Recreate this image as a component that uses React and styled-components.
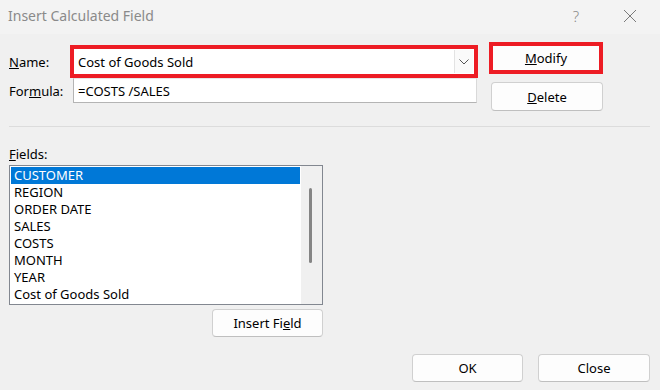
import React from 'react'
import styled, { createGlobalStyle } from 'styled-components'

const GlobalStyle = createGlobalStyle`
  html, body {
    margin: 0;
    padding: 0;
    background: #f0f0f0;
  }
  body {
    font-family: "Segoe UI", "Noto Sans", "Open Sans", sans-serif;
    font-size: 13px;
    color: #000;
  }
`

const fields = ['CUSTOMER', 'REGION', 'ORDER DATE', 'SALES', 'COSTS', 'MONTH', 'YEAR', 'Cost of Goods Sold']

function App() {
  return (
    <>
      <GlobalStyle />
      <Dialog>
        <TitleBar>
          <Title>Insert Calculated Field</Title>
          <TitleIcons>
            <Help>?</Help>
            <svg width="14" height="14" viewBox="0 0 14 14">
              <path d="M1 1 L13 13 M13 1 L1 13" stroke="#7a7a7a" strokeWidth="1" fill="none" />
            </svg>
          </TitleIcons>
        </TitleBar>

        <Body>
          <Top>
            <Form>
              <Label><u>N</u>ame:</Label>
              <Combo>
                <ComboText>Cost of Goods Sold</ComboText>
                <DropBtn>
                  <svg width="10" height="6" viewBox="0 0 10 6">
                    <path d="M0.5 0.5 L5 5 L9.5 0.5" stroke="#555" strokeWidth="1" fill="none" />
                  </svg>
                </DropBtn>
              </Combo>
              <Label>For<u>m</u>ula:</Label>
              <Input>=COSTS /SALES</Input>
            </Form>
            <Side>
              <Highlight>
                <Button $w={106} $h={24} $flat><u>M</u>odify</Button>
              </Highlight>
              <Button $w={112} $h={29} $mt={8} $ml={2}><u>D</u>elete</Button>
            </Side>
          </Top>

          <Separator />

          <Label $block>
            <u>F</u>ields:
          </Label>
          <ListBox>
            <Items>
              {fields.map((f, i) => (
                <Item key={f} $selected={i === 0}>{f}</Item>
              ))}
            </Items>
            <Track>
              <Thumb />
            </Track>
          </ListBox>
          <InsertRow>
            <Button $w={111} $h={28}>Insert Fi<u>e</u>ld</Button>
          </InsertRow>

          <Footer>
            <Button $w={111} $h={28}>OK</Button>
            <Button $w={112} $h={28}>Close</Button>
          </Footer>
        </Body>
      </Dialog>
    </>
  )
}

const Dialog = styled.div`
  width: 660px;
  height: 390px;
  background: #f0f0f0;
  overflow: hidden;
  display: flex;
  flex-direction: column;
`

const TitleBar = styled.div`
  height: 34px;
  background: #f3f3f3;
  display: flex;
  align-items: center;
  justify-content: space-between;
  padding: 0 23px 0 8px;
  flex-shrink: 0;
`

const Title = styled.span`
  color: #8a8a8a;
  font-size: 14px;
  margin-top: -3px;
`

const TitleIcons = styled.div`
  display: flex;
  align-items: center;
  gap: 44px;
  margin-top: -3px;
`

const Help = styled.span`
  color: #8a8a8a;
  font-size: 15px;
  font-weight: 300;
`

const Body = styled.div`
  padding: 0 10px 0 9px;
  display: flex;
  flex-direction: column;
`

const Top = styled.div`
  display: flex;
  align-items: flex-start;
  padding-top: 8px;
  gap: 11px;
`

const Form = styled.div`
  display: grid;
  grid-template-columns: 61px 408px;
  align-items: center;
  margin-top: 3px;
`

const Label = styled.span`
  font-size: 13px;
  color: #000;
  ${p => p.$block && `
    display: block;
    margin-top: 18px;
    height: 20px;
    line-height: 18px;
  `}
`

const Combo = styled.div`
  box-sizing: border-box;
  height: 33px;
  border: 4px solid #ed1c24;
  background: #fff;
  display: flex;
  align-items: center;
  justify-content: space-between;
`

const ComboText = styled.span`
  padding-left: 4px;
  font-size: 13px;
`

const DropBtn = styled.div`
  width: 18px;
  height: 23px;
  margin-right: 1px;
  border-left: 1px solid #e3e3e3;
  background: #fafafa;
  display: flex;
  align-items: center;
  justify-content: center;
`

const Input = styled.div`
  box-sizing: border-box;
  height: 25px;
  margin-left: 3px;
  width: 404px;
  background: #fff;
  border: 1px solid #b4b4b4;
  border-top-color: #e6e6e6;
  border-right-color: #d9d9d9;
  padding: 0 4px;
  display: flex;
  align-items: center;
  font-size: 13px;
`

const Side = styled.div`
  display: flex;
  flex-direction: column;
`

const Highlight = styled.div`
  box-sizing: border-box;
  width: 114px;
  height: 32px;
  border: 4px solid #ed1c24;
  display: flex;
`

const Button = styled.div`
  box-sizing: border-box;
  width: ${p => p.$w}px;
  height: ${p => p.$h}px;
  margin-top: ${p => p.$mt || 0}px;
  margin-left: ${p => p.$ml || 0}px;
  background: #fdfdfd;
  border: ${p => (p.$flat ? 'none' : '1px solid #d0d0d0')};
  border-bottom-color: #bfbfbf;
  border-radius: ${p => (p.$flat ? 0 : 4)}px;
  display: flex;
  align-items: center;
  justify-content: center;
  font-size: 13px;
  color: #000;
  flex-shrink: 0;
`

const Separator = styled.div`
  height: 1px;
  background: #dcdcdc;
  margin-top: 15px;
`

const ListBox = styled.div`
  box-sizing: border-box;
  width: 314px;
  height: 140px;
  border: 1px solid #828790;
  display: flex;
  background: #fff;
`

const Items = styled.div`
  width: 291px;
  padding: 1px;
  box-sizing: border-box;
`

const Item = styled.div`
  height: 17px;
  line-height: 17px;
  padding-left: 3px;
  font-size: 13px;
  background: ${p => (p.$selected ? '#0078d7' : 'transparent')};
  color: ${p => (p.$selected ? '#fff' : '#000')};
`

const Track = styled.div`
  flex: 1;
  background: #f0f0f0;
  display: flex;
  justify-content: center;
  padding-top: 22px;
  padding-right: 2px;
`

const Thumb = styled.div`
  width: 3px;
  height: 75px;
  border-radius: 2px;
  background: #858585;
`

const InsertRow = styled.div`
  width: 314px;
  display: flex;
  justify-content: flex-end;
  margin-top: 4px;
`

const Footer = styled.div`
  display: flex;
  justify-content: flex-end;
  gap: 15px;
  margin-top: 17px;
`

export default App
